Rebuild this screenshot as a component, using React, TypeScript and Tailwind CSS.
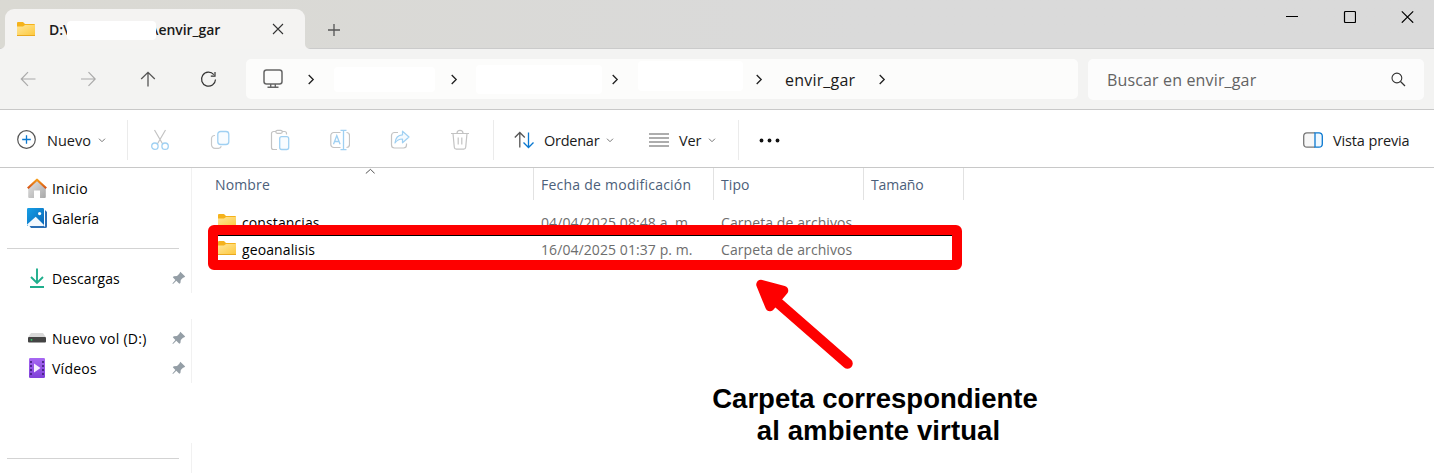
import type { ReactNode } from 'react';

const UI = "font-['Open_Sans','Noto_Sans',sans-serif]";

function Svg({ w, h, className = '', children }: { w: number; h: number; className?: string; children: ReactNode }) {
  return (
    <svg width={w} height={h} viewBox={`0 0 ${w} ${h}`} fill="none" className={`block shrink-0 ${className}`}>
      {children}
    </svg>
  );
}

function Folder({ className = '' }: { className?: string }) {
  return (
    <Svg w={20} h={16} className={className}>
      <defs>
        <linearGradient id="folder" x1="0" y1="0" x2="1" y2="1">
          <stop offset="0" stopColor="#ffe69a" />
          <stop offset="1" stopColor="#fdc83c" />
        </linearGradient>
      </defs>
      <path d="M1 2a1 1 0 0 1 1-1h5l2 2h9a1 1 0 0 1 1 1v6H1z" fill="#f5b21b" />
      <path d="M1 5.500h6L9 4h10v10.500H1z" fill="url(#folder)" />
      <path d="M1 14.500h18" stroke="#e9a820" />
    </Svg>
  );
}

function Chevron({ className = '' }: { className?: string }) {
  return (
    <Svg w={8} h={12} className={className}>
      <path d="M1.700 2 6.200 6.500l-4.500 4.500" stroke="#1f1f1f" strokeWidth="1.300" />
    </Svg>
  );
}

function Down({ className = '' }: { className?: string }) {
  return (
    <Svg w={8} h={6} className={className}>
      <path d="m1 1.700 3 3 3-3" stroke="#777" strokeWidth="1" />
    </Svg>
  );
}

function Pin() {
  return (
    <Svg w={14} h={14} className="ml-auto">
      <path d="M8.300.8 13.200 5.600 12 6.600l-1 .1-2.200 2.300-.4 3-1.100.8-3-3L1 13l-.6-.5 3-3.400L.8 6.200l1-1 3.200-.3L7.300 2.700z" fill="#949ea6" />
    </Svg>
  );
}

function SideRow({ icon, label, pinned, className = 'tracking-[0.1px]' }: { icon?: ReactNode; label?: string; pinned?: boolean; className?: string }) {
  return (
    <div className="flex h-[30px] shrink-0 items-center pr-[5px] pl-[27px]">
      <span className="flex w-[25px] shrink-0">{icon}</span>
      <span className={`whitespace-nowrap ${className}`}>{label}</span>
      {pinned && <Pin />}
    </div>
  );
}

function Divider() {
  return (
    <div className="flex h-[30px] shrink-0 items-center pr-3 pl-[7px]">
      <div className="h-px w-full bg-[#d3d3d3]" />
    </div>
  );
}

function TitleBar() {
  return (
    <div className="flex h-[49px] border-b border-[#cbcbcb] bg-gradient-to-r from-[#dad9d3] to-[#dadada] to-60%">
      <div className="relative mt-[9px] ml-[5px] flex h-10 w-[300px] items-center rounded-t-[9px] bg-[#f4f3f2]">
        <Svg w={5} h={5} className="absolute bottom-0 -left-[5px]"><path d="M5 0v5H0a5 5 0 0 0 5-5" fill="#f4f3f2" /></Svg>
        <Svg w={5} h={5} className="absolute -right-[5px] bottom-0"><path d="M0 0v5h5a5 5 0 0 1-5-5" fill="#f4f3f2" /></Svg>
        <Folder className="ml-[11px]" />
        <span className="mt-px ml-[13px] w-[18px] text-[14px] font-semibold whitespace-nowrap">D:\</span>
        <span className="z-10 mt-[3px] h-[19px] w-[89px] rounded-[4px] bg-white" />
        <span className="mt-px -ml-[3px] text-[14px] font-semibold tracking-[-0.05px]">\envir_gar</span>
        <Svg w={12} h={12} className="absolute top-[14px] left-[267px]">
          <path d="m1 1 10 10M11 1 1 11" stroke="#333" strokeWidth="1.100" />
        </Svg>
      </div>
      <Svg w={14} h={14} className="mt-[23px] ml-[22px]">
        <path d="M7 1v12M1 7h12" stroke="#555" strokeWidth="1.300" />
      </Svg>
      <div className="mt-[10px] mr-[20px] ml-auto flex gap-[45px]">
        <Svg w={12} h={13}><path d="M0 6.500h12" stroke="#000" /></Svg>
        <Svg w={13} h={13}><rect x="1.500" y="1.500" width="11" height="11" rx="1" stroke="#000" strokeWidth="1.200" /></Svg>
        <Svg w={13} h={13}><path d="m.8 1.300 11.400 11.400M12.200 1.300.8 12.700" stroke="#000" strokeWidth="1.200" /></Svg>
      </div>
    </div>
  );
}

function NavBar() {
  return (
    <div className="flex h-[61px] border-b border-[#c8c8c8] bg-[#f3f3f2] pt-[10px]">
      <div className="flex h-10 w-[246px] shrink-0 items-center gap-11 pl-5">
        <Svg w={16} h={16}><path d="M15.500 8H1.500M8 1.200 1.300 8 8 14.800" stroke="#aaa" strokeWidth="1.200" /></Svg>
        <Svg w={16} h={16}><path d="M1 8h14M8.500 1.200 15.200 8l-6.700 6.800" stroke="#aaa" strokeWidth="1.200" /></Svg>
        <Svg w={16} h={16}><path d="M8 15.500v-14M1.200 8 8 1.300 14.800 8" stroke="#555" strokeWidth="1.300" /></Svg>
        <Svg w={18} h={18}><path d="M13.800 4.600A7 7 0 1 0 15.500 9.500M15 2v4.200h-4.200" stroke="#333" strokeWidth="1.200" /></Svg>
      </div>
      <div className="flex h-10 w-[832px] shrink-0 items-center rounded-[5px] bg-[#fcfcfb] pl-[17px] text-[16px]">
        <Svg w={20} h={20}>
          <rect x="1" y="1" width="18" height="14" rx="2.500" stroke="#666" strokeWidth="1.500" />
          <path d="M7.700 15v3M12.300 15v3M4.500 18.300h11" stroke="#666" strokeWidth="1.400" />
        </Svg>
        <Chevron className="ml-6" />
        <span className="ml-[19px] h-[25px] w-[101px] rounded-[4px] bg-white" />
        <Chevron className="ml-[15px]" />
        <span className="ml-[18px] h-[29px] w-[126px] rounded-[4px] bg-white" />
        <Chevron className="ml-[9px]" />
        <span className="-mt-[6px] ml-[19px] h-[30px] w-[105px] rounded-[4px] bg-white" />
        <Chevron className="ml-3" />
        <span className="mt-[2px] ml-[22px] w-[71px] tracking-[0.2px] whitespace-nowrap">envir_gar</span>
        <Chevron className="ml-[22px]" />
      </div>
      <div className="ml-[10px] flex h-[41px] w-[336px] items-center rounded-[5px] bg-[#fcfcfc] pr-[18px] pl-[19px] text-[16px] text-[#636363]">
        <span className="tracking-[0.15px] whitespace-nowrap">Buscar en envir_gar</span>
        <Svg w={15} h={15} className="ml-auto">
          <circle cx="5.900" cy="6" r="4.900" stroke="#333" strokeWidth="1.100" />
          <path d="m9.500 9.500 4.500 4.500" stroke="#333" strokeWidth="1.200" />
        </Svg>
      </div>
    </div>
  );
}

function Sep({ className = '' }: { className?: string }) {
  return <span className={`h-10 w-px shrink-0 bg-[#ebebeb] ${className}`} />;
}

function Toolbar() {
  return (
    <div className="flex h-[58px] items-center border-b border-[#c8c8c8] bg-white pt-[3px] pl-4 text-[14.5px] text-[#1a1a1a]">
      <Svg w={20} h={20}>
        <circle cx="10.500" cy="9.500" r="8.800" stroke="#555" strokeWidth="1.200" />
        <path d="M10.500 5.200v8.600M6.200 9.500h8.600" stroke="#0a78d0" strokeWidth="1.300" />
      </Svg>
      <span className="mt-[2px] ml-[11px] w-[43px] whitespace-nowrap">Nuevo</span>
      <Down className="ml-2" />
      <Sep className="ml-[21px]" />
      <div className="ml-[22px] flex gap-10">
        <Svg w={20} h={22}>
          <path d="m4.500 1 8.300 14.200M15.500 1 7.200 15.200" stroke="#c3c3c3" strokeWidth="1.200" />
          <circle cx="4.900" cy="17.200" r="3.200" stroke="#9fd0f2" strokeWidth="1.300" />
          <circle cx="15.100" cy="17.200" r="3.200" stroke="#9fd0f2" strokeWidth="1.300" />
        </Svg>
        <Svg w={20} h={22}>
          <path d="M5 6.500H4.500A3 3 0 0 0 1.500 9.500v6.300a3.500 3.500 0 0 0 3.500 3.500h3.500a3 3 0 0 0 2.800-2" stroke="#c8c8c8" strokeWidth="1.200" />
          <rect x="7.800" y="2.500" width="11" height="13" rx="2.800" fill="#f8fcff" stroke="#9fd0f2" strokeWidth="1.300" />
        </Svg>
        <Svg w={20} h={22}>
          <path d="M6 2.500H3.500a2 2 0 0 0-2 2v14a2 2 0 0 0 2 2H7M12 2.500h2.500a2 2 0 0 1 2 2v1" stroke="#c3c3c3" strokeWidth="1.200" />
          <rect x="5.800" y="1.300" width="6.500" height="3" rx="1.500" stroke="#c3c3c3" strokeWidth="1.200" />
          <rect x="9.700" y="7.700" width="9" height="12.800" rx="2" fill="#f8fcff" stroke="#9fd0f2" strokeWidth="1.300" />
        </Svg>
        <Svg w={20} h={22}>
          <path d="M10.500 3.500H3.800A3 3 0 0 0 .8 6.500v9a3 3 0 0 0 3 3h6.700M16.500 3.500a3 3 0 0 1 3 3v9a3 3 0 0 1-3 3" stroke="#c3c3c3" strokeWidth="1.200" />
          <path d="M13.500 1.500v19M10.500 1.300h6M10.500 20.700h6M3.500 15.300 6.800 6.500l3.300 8.800M4.600 12.500H9" stroke="#9fd0f2" strokeWidth="1.300" />
        </Svg>
        <Svg w={20} h={22}>
          <path d="M8 3.500H4.500a3 3 0 0 0-3 3v9.500a3 3 0 0 0 3 3h9a3 3 0 0 0 3-3v-1.500" stroke="#c3c3c3" strokeWidth="1.200" />
          <path d="M12.500 2.200v3.600C8 6 5.500 9 5 14c2-3 4.300-4 7.500-4v3.800L19 8z" fill="#f4faff" stroke="#9fd0f2" strokeWidth="1.200" strokeLinejoin="round" />
        </Svg>
        <Svg w={20} h={22}>
          <path d="M1 4.500h18M7 4.300a3 3 0 0 1 6 0M3 4.500l1.300 13.800a2 2 0 0 0 2 1.900h7.400a2 2 0 0 0 2-1.900L17 4.500M8.200 8.500v7M11.800 8.500v7" stroke="#c3c3c3" strokeWidth="1.200" />
        </Svg>
      </div>
      <Sep className="ml-[23px]" />
      <Svg w={20} h={18} className="ml-5">
        <path d="M5.800 16.500v-15M.8 6.500l5-5 5 5" stroke="#555" strokeWidth="1.300" />
        <path d="M14.500 1.500v15M9.500 11.500l5 5 5-5" stroke="#0a78d0" strokeWidth="1.300" />
      </Svg>
      <span className="mt-[2px] ml-[10px] w-[54px] tracking-[-0.25px] whitespace-nowrap">Ordenar</span>
      <Down className="ml-2" />
      <Svg w={20} h={14} className="ml-[35px]">
        <path d="M0 1h20M0 5h20M0 9h20M0 13h20" stroke="#5c5c5c" strokeWidth="1.200" />
      </Svg>
      <span className="mt-[2px] ml-[10px] w-[21px] tracking-[-0.2px] whitespace-nowrap">Ver</span>
      <Down className="ml-2" />
      <Sep className="ml-[22px]" />
      <Svg w={22} h={6} className="ml-5">
        <circle cx="2.500" cy="3.500" r="1.900" fill="#111" />
        <circle cx="10.500" cy="3.500" r="1.900" fill="#111" />
        <circle cx="18.500" cy="3.500" r="1.900" fill="#111" />
      </Svg>
      <div className="mr-6 ml-auto flex items-center">
        <Svg w={20} h={16}>
          <path d="M12 .8H4A3.300 3.300 0 0 0 .7 4v8A3.300 3.300 0 0 0 4 15.200h8" fill="#f7f7f7" stroke="#777" strokeWidth="1.300" />
          <path d="M12 .8h4A3.300 3.300 0 0 1 19.300 4v8a3.300 3.300 0 0 1-3.300 3.200h-4z" fill="#eff8ff" stroke="#0a78d0" strokeWidth="1.300" />
        </Svg>
        <span className="mt-[2px] ml-[10px] w-[77px] tracking-[-0.13px] whitespace-nowrap">Vista previa</span>
      </div>
    </div>
  );
}

const homeIcon = (
  <Svg w={20} h={20}>
    <defs>
      <linearGradient id="wall" x1="0" y1="0" x2="1" y2="1"><stop stopColor="#e4e4e4" /><stop offset="1" stopColor="#a8a8a8" /></linearGradient>
      <linearGradient id="roof" x1="0" y1="0" x2="0" y2="1"><stop stopColor="#f59a18" /><stop offset="1" stopColor="#d65317" /></linearGradient>
    </defs>
    <path d="M1.200 10 10 2l8.800 8v9a1 1 0 0 1-1 1H13v-7.500H7V20H2.200a1 1 0 0 1-1-1z" fill="url(#wall)" />
    <path d="M.8 10.300 10 1.700l9.200 8.600" stroke="url(#roof)" strokeWidth="2.200" strokeLinejoin="round" />
  </Svg>
);

const galleryIcon = (
  <Svg w={20} h={20}>
    <defs>
      <linearGradient id="sky" x1="0" y1="0" x2="1" y2="1"><stop stopColor="#169fe6" /><stop offset="1" stopColor="#0966b8" /></linearGradient>
    </defs>
    <path d="M4 20h14.500a1.500 1.500 0 0 0 1.500-1.500V4l-2-2v16H2.500z" fill="#2b6fb5" />
    <path d="M17.500 0v18.500" stroke="#fff" strokeWidth="1" />
    <rect width="17" height="18" rx="1.200" fill="url(#sky)" />
    <path d="m0 16.500 8.700-7.800 8.300 8.300-.7 1H1.200z" fill="#f3f9fe" />
    <circle cx="12.600" cy="5.600" r="1.600" fill="#fff" />
  </Svg>
);

const downloadIcon = (
  <Svg w={20} h={20}>
    <path d="M10 .5v14M4 9l6 6 6-6M3 19h14" stroke="#1fae8c" strokeWidth="1.900" />
  </Svg>
);

const driveIcon = (
  <Svg w={20} h={12}>
    <path d="M4 1h12l3 4.500H1z" fill="#d9d9d9" />
    <rect x="1" y="5" width="18" height="5.500" rx="1" fill="#444" />
    <circle cx="4.500" cy="7.800" r=".9" fill="#35d06a" />
  </Svg>
);

const videoIcon = (
  <Svg w={20} h={20}>
    <defs>
      <linearGradient id="film" x1="0" y1="0" x2="0" y2="1"><stop stopColor="#a768f2" /><stop offset="1" stopColor="#7f40d8" /></linearGradient>
    </defs>
    <rect x="2" width="16" height="20" rx="1.200" fill="url(#film)" />
    <path d="M4 3v15M16 3v15" stroke="#43207e" strokeWidth="1.700" strokeDasharray="2 2" />
    <path d="m7 5.500 6.500 4.500L7 14.500z" fill="#f6efff" />
  </Svg>
);

function Sidebar() {
  return (
    <div className="flex h-[305px] w-[192px] shrink-0 text-[14px] text-black">
      <div className="flex w-[191px] flex-col pt-[5px]">
        <SideRow icon={homeIcon} label="Inicio" className="tracking-[0.2px]" />
        <SideRow icon={galleryIcon} label="Galería" />
        <Divider />
        <SideRow icon={downloadIcon} label="Descargas" pinned />
        <SideRow />
        <SideRow icon={driveIcon} label="Nuevo vol (D:)" pinned className="tracking-[0.28px]" />
        <SideRow icon={videoIcon} label="Vídeos" pinned className="tracking-[0.25px]" />
        <SideRow />
        <SideRow />
        <Divider />
      </div>
      <div className="flex w-px flex-col">
        <span className="h-[125px] bg-[#f1f1f1]" />
        <span className="mt-[26px] h-16 bg-[#f1f1f1]" />
        <span className="mt-[60px] h-[30px] bg-[#f1f1f1]" />
      </div>
    </div>
  );
}

const GRID = 'grid grid-cols-[342px_180px_150px_100px]';

function Row({ name, date }: { name: string; date: string }) {
  return (
    <div className={`${GRID} h-[27px] items-center whitespace-nowrap text-[#6d6d6d]`}>
      <div className="flex items-center pl-[25px] text-black">
        <Folder className="-mt-[3px]" />
        <span className="ml-[5px] tracking-[0.1px]">{name}</span>
      </div>
      <span className="pl-[7px] tracking-[0.08px]">{date}</span>
      <span className="pl-[7px] tracking-[0.09px]">Carpeta de archivos</span>
    </div>
  );
}

function FileList() {
  return (
    <div className="relative flex-1 text-[14px]">
      <div className={`${GRID} h-8 text-[#4c607a]`}>
        <span className="border-r border-[#e2e2e2] pt-[6px] pl-[23px] tracking-[0.15px]">Nombre</span>
        <span className="border-r border-[#e2e2e2] pt-[6px] pl-[7px] tracking-[0.24px] whitespace-nowrap">Fecha de modificación</span>
        <span className="border-r border-[#e2e2e2] pt-[6px] pl-[7px] tracking-[0.1px]">Tipo</span>
        <span className="border-r border-[#e2e2e2] pt-[6px] pl-[7px] tracking-[-0.1px]">Tamaño</span>
      </div>
      <Svg w={10} h={6} className="absolute top-0 left-[173px]">
        <path d="m.8 5.500 4.700-4.200 4.200 4.200" stroke="#555" />
      </Svg>
      <div className="pt-[9px]">
        <Row name="constancias" date="04/04/2025 08:48 a. m." />
        <Row name="geoanalisis" date="16/04/2025 01:37 p. m." />
      </div>
      <div className="absolute top-[57px] left-4 h-[45px] w-[754px] rounded-[6px] border-10 border-[#fe0000]">
        <div className="h-px bg-black" />
      </div>
      <Svg w={110} h={95} className="absolute top-[107px] left-[558px]">
        <path d="m18 19 79.500 69.500" stroke="#fe0000" strokeWidth="10.500" strokeLinecap="round" />
        <path d="m11 9.500 22.500 6L20 31.500z" fill="#fe0000" stroke="#fe0000" strokeWidth="9.500" strokeLinejoin="round" />
      </Svg>
      <div className="absolute top-[215px] left-[483px] w-[400px] text-center font-['Liberation_Sans',Arial,sans-serif] text-[27.5px] leading-8 font-bold text-black">
        <p>Carpeta correspondiente</p>
        <p className="pl-[7px] tracking-[0.1px]">al ambiente virtual</p>
      </div>
    </div>
  );
}

export default function App() {
  return (
    <div className={`h-[473px] w-[1434px] overflow-hidden bg-white text-[#1a1a1a] ${UI}`}>
      <TitleBar />
      <NavBar />
      <Toolbar />
      <div className="flex h-[305px]">
        <Sidebar />
        <FileList />
      </div>
    </div>
  );
}
